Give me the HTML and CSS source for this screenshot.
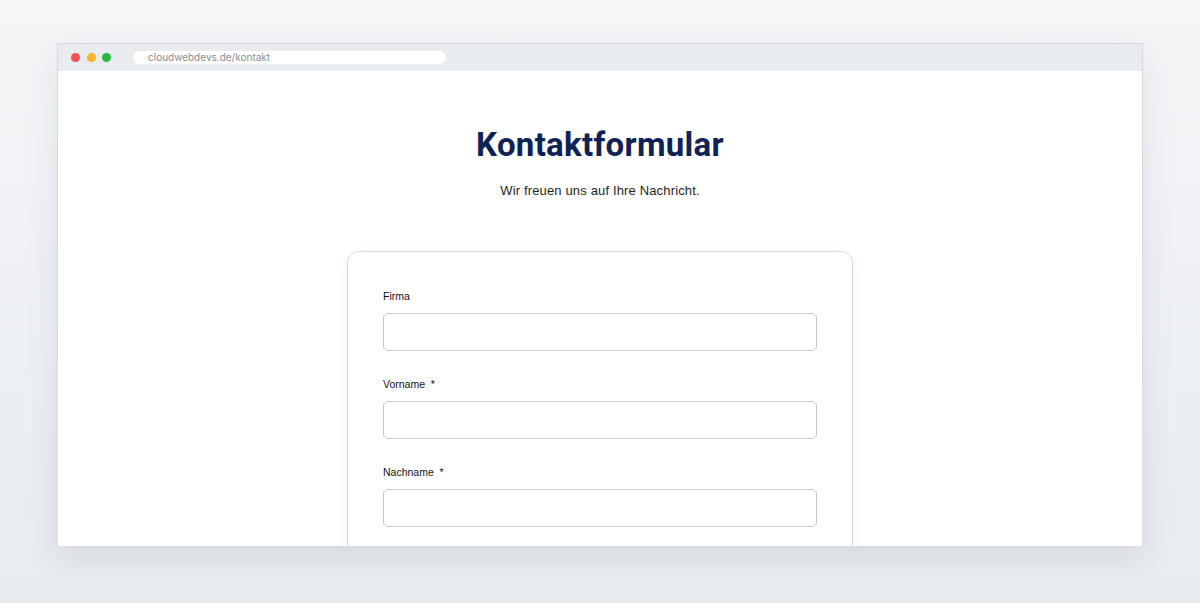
FILE: index.html
```html
<!DOCTYPE html>
<html lang="de">
<head>
<meta charset="utf-8">
<title>Kontakt</title>
<link rel="stylesheet" href="styles.css">
</head>
<body>
<div class="stage">
  <div class="window">
    <div class="chrome">
      <div class="dots">
        <span class="dot red"></span>
        <span class="dot yellow"></span>
        <span class="dot green"></span>
      </div>
      <div class="url">cloudwebdevs.de/kontakt</div>
    </div>
    <div class="page">
      <h1 class="title">Kontaktformular</h1>
      <p class="lead">Wir freuen uns auf Ihre Nachricht.</p>
      <form class="card">
        <div class="field">
          <label class="label">Firma</label>
          <input class="input" type="text">
        </div>
        <div class="field">
          <label class="label">Vorname&nbsp; *</label>
          <input class="input" type="text">
        </div>
        <div class="field">
          <label class="label">Nachname&nbsp; *</label>
          <input class="input" type="text">
        </div>
      </form>
    </div>
  </div>
</div>
</body>
</html>
```
FILE: styles.css
```css
html, body {
  margin: 0;
  padding: 0;
  height: 100%;
}
body {
  background: linear-gradient(180deg, #f5f6f8 0%, #eceff3 60%, #e8ebef 100%);
  font-family: "Liberation Sans", "Inter", sans-serif;
  overflow: hidden;
}
.stage {
  padding: 43px 57px 0 57px;
}
.window {
  height: 504px;
  background: #fff;
  border: 1px solid #d6d9dd;
  box-sizing: border-box;
  box-shadow: 0 10px 30px rgba(40, 60, 90, 0.10);
  display: flex;
  flex-direction: column;
  overflow: hidden;
}
.chrome {
  height: 27px;
  background: #e9ecef;
  display: flex;
  align-items: center;
  padding-left: 13px;
  flex-shrink: 0;
}
.dots {
  display: flex;
  gap: 6.5px;
}
.dot {
  width: 9px;
  height: 9px;
  border-radius: 50%;
  display: block;
}
.red { background: #f0504f; }
.yellow { background: #f6b52b; }
.green { background: #25b83c; }
.url {
  margin-left: 22px;
  width: 313px;
  height: 13px;
  background: #fff;
  border-radius: 7px;
  font-size: 10px;
  line-height: 13px;
  color: #8a8d91;
  padding-left: 15px;
  box-sizing: border-box;
  font-family: "Inter", "Liberation Sans", sans-serif;
}
.page {
  flex: 1;
  display: flex;
  flex-direction: column;
  align-items: center;
  overflow: hidden;
}
.title {
  margin: 54px 0 0 0;
  font-family: "Roboto", "Liberation Sans", sans-serif;
  font-weight: 700;
  font-size: 33px;
  line-height: 40px;
  color: #0e2255;
  letter-spacing: 0.3px;
}
.lead {
  margin: 17px 0 0 0;
  font-size: 13px;
  line-height: 18px;
  color: #1e1f22;
  letter-spacing: 0.15px;
}
.card {
  margin-top: 51px;
  width: 506px;
  box-sizing: border-box;
  border: 1px solid #d9d9db;
  border-radius: 12px;
  padding: 36px 35px 60px 35px;
  box-shadow: 0 4px 18px rgba(0, 0, 0, 0.04);
  display: flex;
  flex-direction: column;
  gap: 25px;
  flex-shrink: 0;
}
.field {
  display: flex;
  flex-direction: column;
}
.label {
  font-size: 10.5px;
  line-height: 16px;
  color: #111;
  margin-bottom: 9px;
}
.input {
  height: 38px;
  border: 1.5px solid #c6c7c9;
  border-radius: 5px;
  box-sizing: border-box;
  background: #fff;
  margin: 0;
}
```
